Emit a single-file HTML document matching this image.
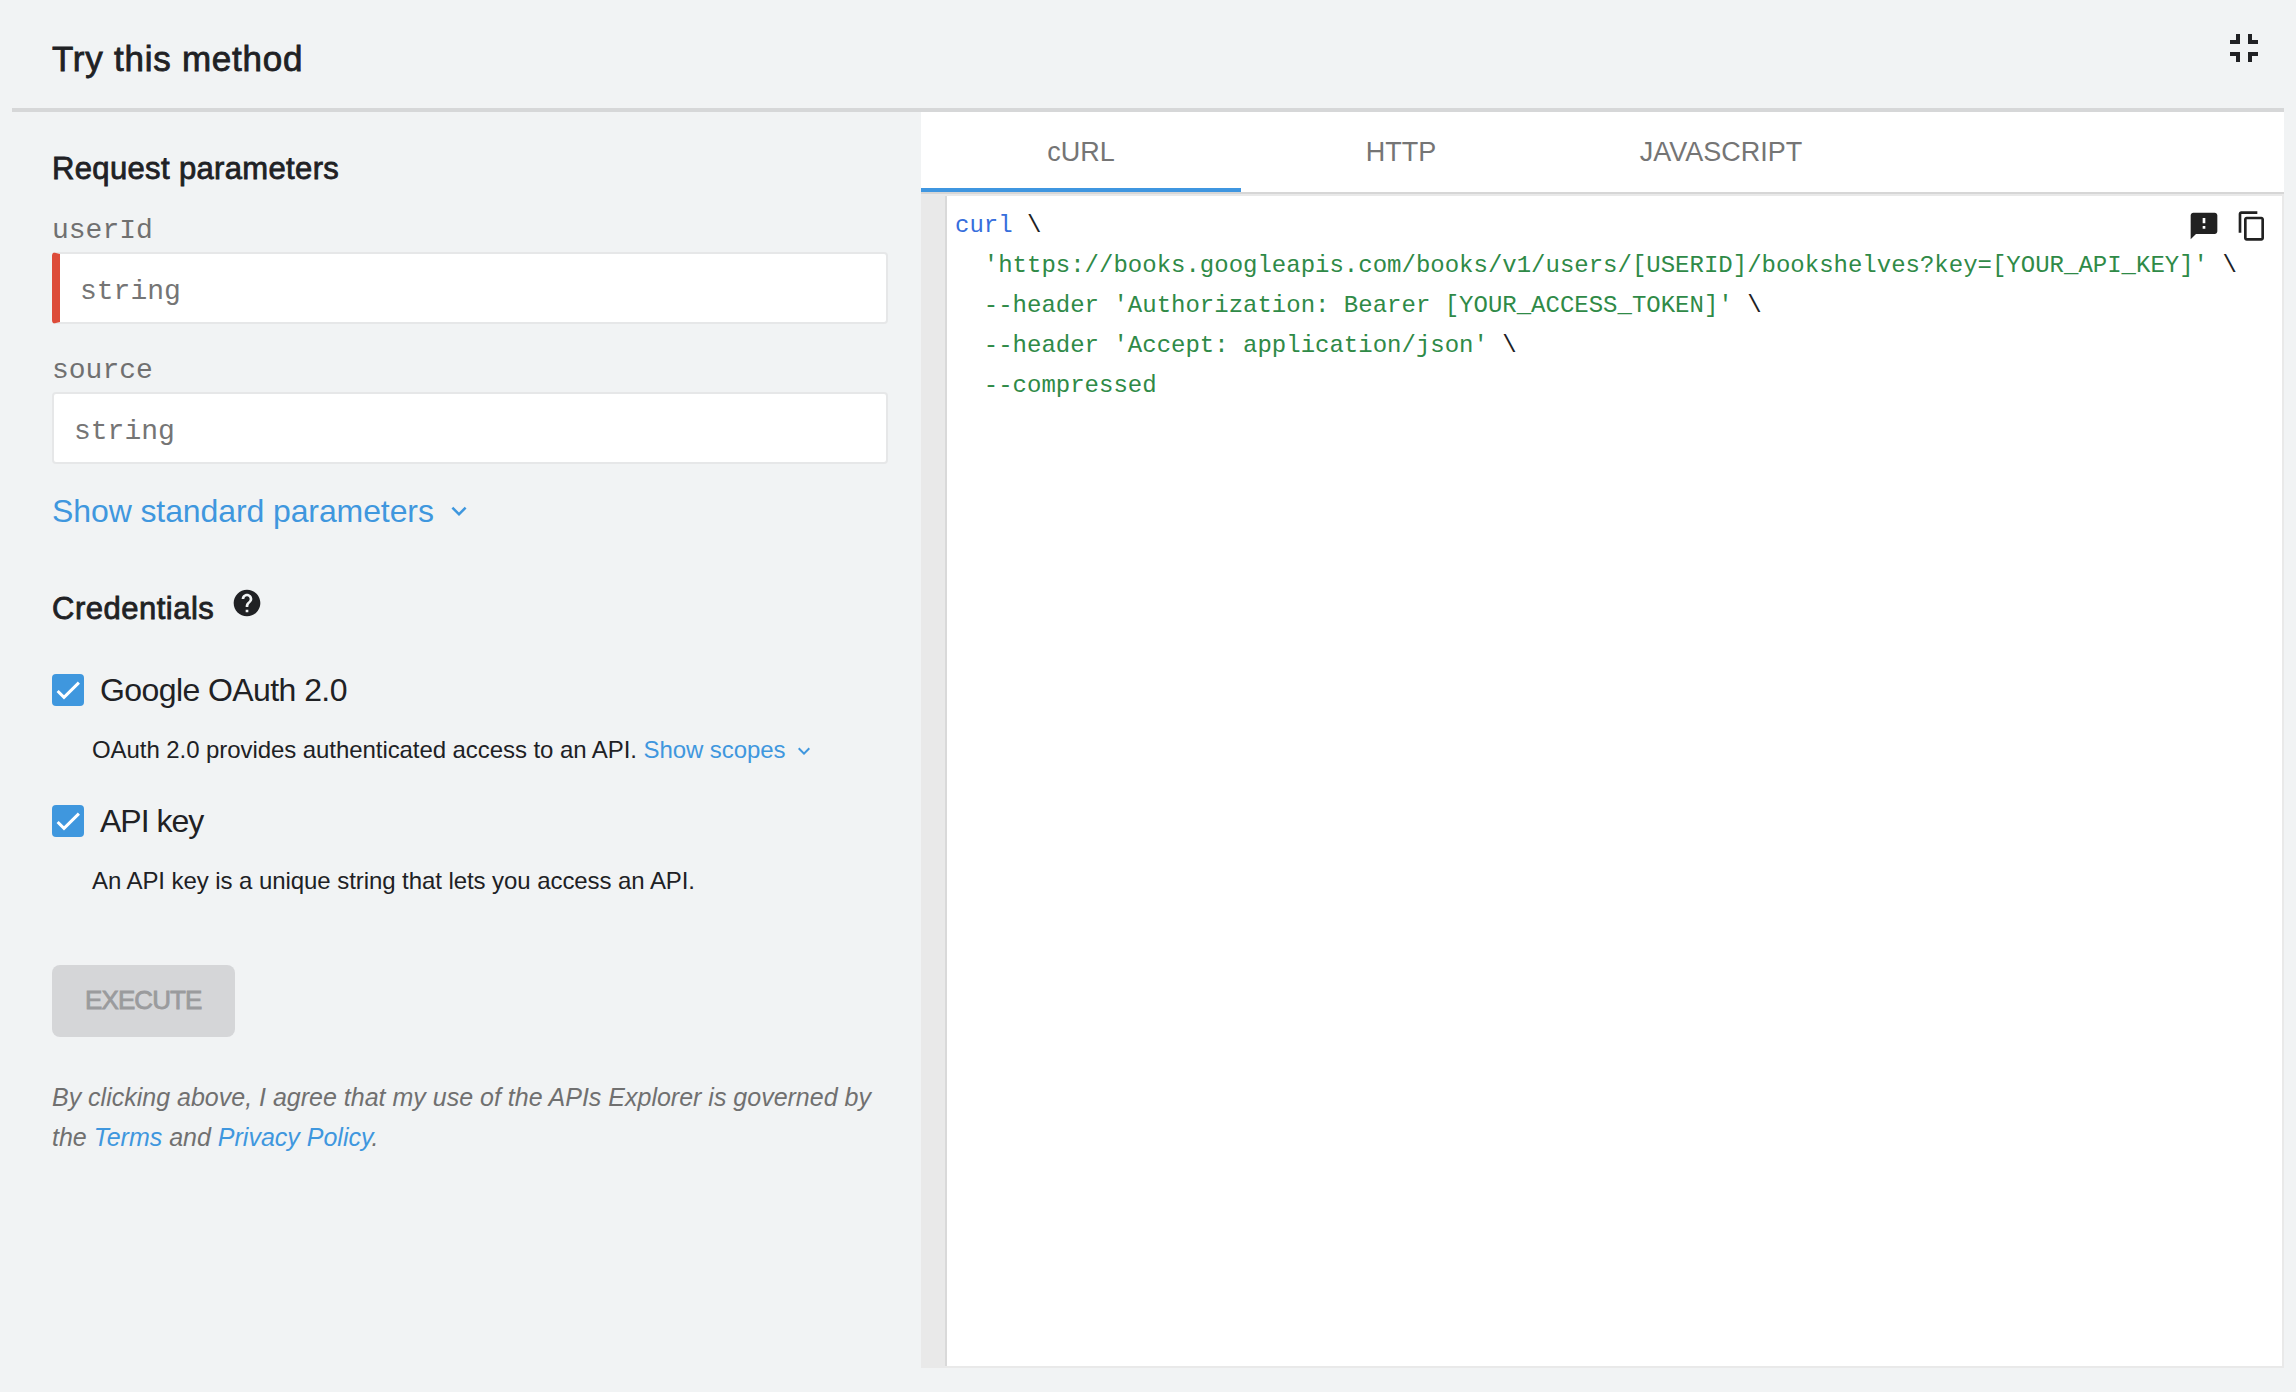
<!DOCTYPE html>
<html>
<head>
<meta charset="utf-8">
<style>
html,body{margin:0;padding:0;}
body{width:2296px;height:1392px;background:#f1f3f4;position:relative;overflow:hidden;font-family:"Liberation Sans",sans-serif;color:#202124;}
.a{position:absolute;white-space:nowrap;line-height:1;}
.mono{font-family:"Liberation Mono",monospace;}
.b{font-weight:bold;}
.med{-webkit-text-stroke:0.8px currentColor;}
.link{color:#3f97de;}
#hdrline{position:absolute;left:12px;top:108px;width:2272px;height:4px;background:#d6d7d8;}
.inp{position:absolute;left:52px;width:836px;height:72px;box-sizing:border-box;background:#fff;border:2px solid #e6e7e8;border-radius:4px;}
.inp.req{border-left:8px solid #dd4b39;}
.cb{position:absolute;left:52px;width:32px;height:32px;background:#3f97de;border-radius:4px;}
.cb svg{position:absolute;left:0;top:0;}
#btn{position:absolute;left:52px;top:965px;width:183px;height:72px;background:#d5d6d8;border-radius:8px;}
#tabs{position:absolute;left:921px;top:112px;width:1363px;height:80px;background:#fff;}
#tabul{position:absolute;left:921px;top:188px;width:320px;height:4px;background:#3f96e0;}
#tabline{position:absolute;left:921px;top:192px;width:1363px;height:2px;background:#d6d6d6;}
#code{position:absolute;left:921px;top:194px;width:1363px;height:1174px;background:#e9e9e9;}
#gutline{position:absolute;left:945px;top:196px;width:2px;height:1170px;background:#d9d9d9;}
#codew{position:absolute;left:947px;top:196px;width:1335px;height:1170px;background:#fff;}
.tab{color:#757575;font-size:27px;}
.code{font-family:"Liberation Mono",monospace;font-size:24px;color:#2f8a47;}
.kw{color:#376edc;}
.pl{color:#202124;}
</style>
</head>
<body>
<div class="a med" id="title" style="left:52px;top:41px;font-size:35px;letter-spacing:0.75px;">Try this method</div>
<svg style="position:absolute;left:2220px;top:24px;" width="48" height="48" viewBox="0 0 24 24"><path fill="#202124" d="M5 16h3v3h2v-5H5v2zm3-8H5v2h5V5H8v3zm6 11h2v-3h3v-2h-5v5zm2-11V5h-2v5h5V8h-3z"/></svg>
<div id="hdrline"></div>

<div class="a med" id="reqp" style="left:52px;top:153px;font-size:31px;letter-spacing:0.35px;">Request parameters</div>
<div class="a mono" id="lbl1" style="left:52px;top:217px;font-size:28px;color:#707070;">userId</div>
<div class="inp req" style="top:252px;"></div>
<div class="a mono" id="ph1" style="left:80px;top:278px;font-size:28px;color:#757575;">string</div>
<div class="a mono" id="lbl2" style="left:52px;top:357px;font-size:28px;color:#707070;">source</div>
<div class="inp" style="top:392px;"></div>
<div class="a mono" id="ph2" style="left:74px;top:418px;font-size:28px;color:#757575;">string</div>

<div class="a link" id="ssp" style="left:52px;top:495px;font-size:32px;letter-spacing:-0.1px;">Show standard parameters</div>
<svg style="position:absolute;left:444.2px;top:496px;" width="30" height="30" viewBox="0 0 24 24"><path fill="#3f97de" d="M16.59 8.59L12 13.17 7.41 8.59 6 10l6 6 6-6z"/></svg>

<div class="a med" id="cred" style="left:52px;top:593px;font-size:31px;letter-spacing:0.5px;">Credentials</div>
<svg style="position:absolute;left:230.75px;top:586.8px;" width="32" height="32" viewBox="0 0 24 24"><path fill="#202124" d="M12 2C6.48 2 2 6.48 2 12s4.48 10 10 10 10-4.48 10-10S17.52 2 12 2zm1 17h-2v-2h2v2zm2.07-7.750l-.9.92C13.45 12.9 13 13.5 13 15h-2v-.5c0-1.1.45-2.1 1.17-2.83l1.24-1.26c.37-.36.59-.86.59-1.410 0-1.1-.9-2-2-2s-2 .9-2 2H8c0-2.21 1.79-4 4-4s4 1.79 4 4c0 .88-.36 1.68-.93 2.25z"/></svg>

<div class="cb" style="top:674px;"><svg width="32" height="32" viewBox="0 0 32 32"><path fill="none" stroke="#fff" stroke-width="3" d="M5.6 17l6.4 6.4L26.9 8.6"/></svg></div>
<div class="a" id="goa" style="left:100px;top:674px;font-size:32px;letter-spacing:-0.58px;">Google OAuth 2.0</div>
<div class="a" id="d1" style="left:92px;top:738px;font-size:24px;letter-spacing:-0.07px;">OAuth 2.0 provides authenticated access to an API. <span class="link">Show scopes</span></div>
<svg style="position:absolute;left:791.7px;top:738.7px;" width="24" height="24" viewBox="0 0 24 24"><path fill="#3f97de" d="M16.59 8.59L12 13.17 7.41 8.59 6 10l6 6 6-6z"/></svg>

<div class="cb" style="top:805px;"><svg width="32" height="32" viewBox="0 0 32 32"><path fill="none" stroke="#fff" stroke-width="3" d="M5.6 17l6.4 6.4L26.9 8.6"/></svg></div>
<div class="a" id="apik" style="left:100px;top:805px;font-size:32px;letter-spacing:-1px;">API key</div>
<div class="a" id="d2" style="left:92px;top:869px;font-size:24px;letter-spacing:-0.07px;">An API key is a unique string that lets you access an API.</div>

<div id="btn"></div>
<div class="a med" id="exe" style="left:85px;top:987px;font-size:26px;color:#9a9b9d;letter-spacing:-0.9px;">EXECUTE</div>

<div class="a" id="disc" style="left:52px;top:1077px;font-size:25px;font-style:italic;color:#707070;line-height:40px;">By clicking above, I agree that my use of the APIs Explorer is governed by<br>the <span class="link">Terms</span> and <span class="link">Privacy Policy</span>.</div>

<div id="tabs"></div>
<div class="a tab" id="t1" style="left:1081px;top:139px;transform:translateX(-50%);">cURL</div>
<div class="a tab" id="t2" style="left:1401px;top:139px;transform:translateX(-50%);">HTTP</div>
<div class="a tab" id="t3" style="left:1721px;top:139px;transform:translateX(-50%);">JAVASCRIPT</div>
<div id="tabul"></div>
<div id="tabline"></div>
<div id="code"></div>
<div id="gutline"></div>
<div id="codew"></div>

<div class="a code" style="left:955px;top:206px;line-height:40px;white-space:pre;"><span class="kw">curl</span> <span class="pl">\</span>
  'https://books.googleapis.com/books/v1/users/[USERID]/bookshelves?key=[YOUR_API_KEY]' <span class="pl">\</span>
  --header 'Authorization: Bearer [YOUR_ACCESS_TOKEN]' <span class="pl">\</span>
  --header 'Accept: application/json' <span class="pl">\</span>
  --compressed</div>

<svg style="position:absolute;left:2188.2px;top:210.1px;" width="32" height="32" viewBox="0 0 24 24"><path fill="#212121" d="M20 2H4c-1.1 0-1.99.9-1.99 2L2 22l4-4h14c1.1 0 2-.9 2-2V4c0-1.1-.9-2-2-2zm-7 12h-2v-2h2v2zm0-4h-2V6h2v4z"/></svg>
<svg style="position:absolute;left:2236.1px;top:210.2px;" width="32" height="32" viewBox="0 0 24 24"><path fill="#212121" d="M16 1H4c-1.1 0-2 .9-2 2v14h2V3h12V1zm3 4H8c-1.1 0-2 .9-2 2v14c0 1.1.9 2 2 2h11c1.1 0 2-.9 2-2V7c0-1.1-.9-2-2-2zm0 16H8V7h11v14z"/></svg>
</body>
</html>
